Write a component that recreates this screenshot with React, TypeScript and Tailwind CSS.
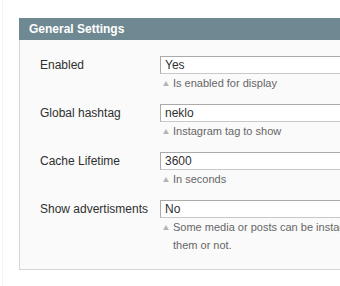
import React from 'react';

interface Field {
  label: string;
  value: string;
  hint: string[];
}

const fields: Field[] = [
  { label: 'Enabled', value: 'Yes', hint: ['Is enabled for display'] },
  { label: 'Global hashtag', value: 'neklo', hint: ['Instagram tag to show'] },
  { label: 'Cache Lifetime', value: '3600', hint: ['In seconds'] },
  {
    label: 'Show advertisments',
    value: 'No',
    hint: ['Some media or posts can be instagram advertisments. Choose to show', 'them or not.'],
  },
];

const FieldRow = ({ field }: { field: Field }) => (
  <div className="flex">
    <div className="w-[120px] shrink-0 text-[12px] leading-[18px] text-[#2f2f2f]">{field.label}</div>
    <div className="w-[280px]">
      <div className="h-[18px] border border-t-[#aaa] border-l-[#aaa] border-r-[#c8c8c8] border-b-[#c8c8c8] bg-white px-[4px] text-[12px] leading-[16px] text-[#2f2f2f]">
        {field.value}
      </div>
      <div className="flex text-[11px] leading-[18px] text-[#666]">
        <div className="flex h-[18px] w-[13px] shrink-0 items-center pl-[3px]">
          <span className="block h-0 w-0 border-x-[3px] border-b-[5px] border-x-transparent border-b-[#b5b5b5]" />
        </div>
        <div className="whitespace-nowrap">
          {field.hint.map((line, i) => (
            <div key={i}>{line}</div>
          ))}
        </div>
      </div>
    </div>
  </div>
);

const App = () => {
  return (
    <div className="h-[286px] w-[340px] overflow-hidden bg-white font-['Liberation_Sans',Arial,sans-serif]">
      <div className="flex h-full">
        <div className="w-[2px] shrink-0" />
        <div className="w-px shrink-0 bg-[#f3f3f3]" />
        <div className="pl-[16px] pt-[18px]">
          <div className="w-[400px]">
            <div className="h-[22px] bg-[#6f8992] px-[10px] text-[12px] font-bold leading-[22px] text-white">
              General Settings
            </div>
            <div className="flex flex-col gap-[12px] border border-t-0 border-[#d6d6d6] bg-[#fafafa] pb-[15px] pl-[20px] pt-[16px]">
              {fields.map((f) => (
                <FieldRow key={f.label} field={f} />
              ))}
            </div>
          </div>
        </div>
      </div>
    </div>
  );
};

export default App;
